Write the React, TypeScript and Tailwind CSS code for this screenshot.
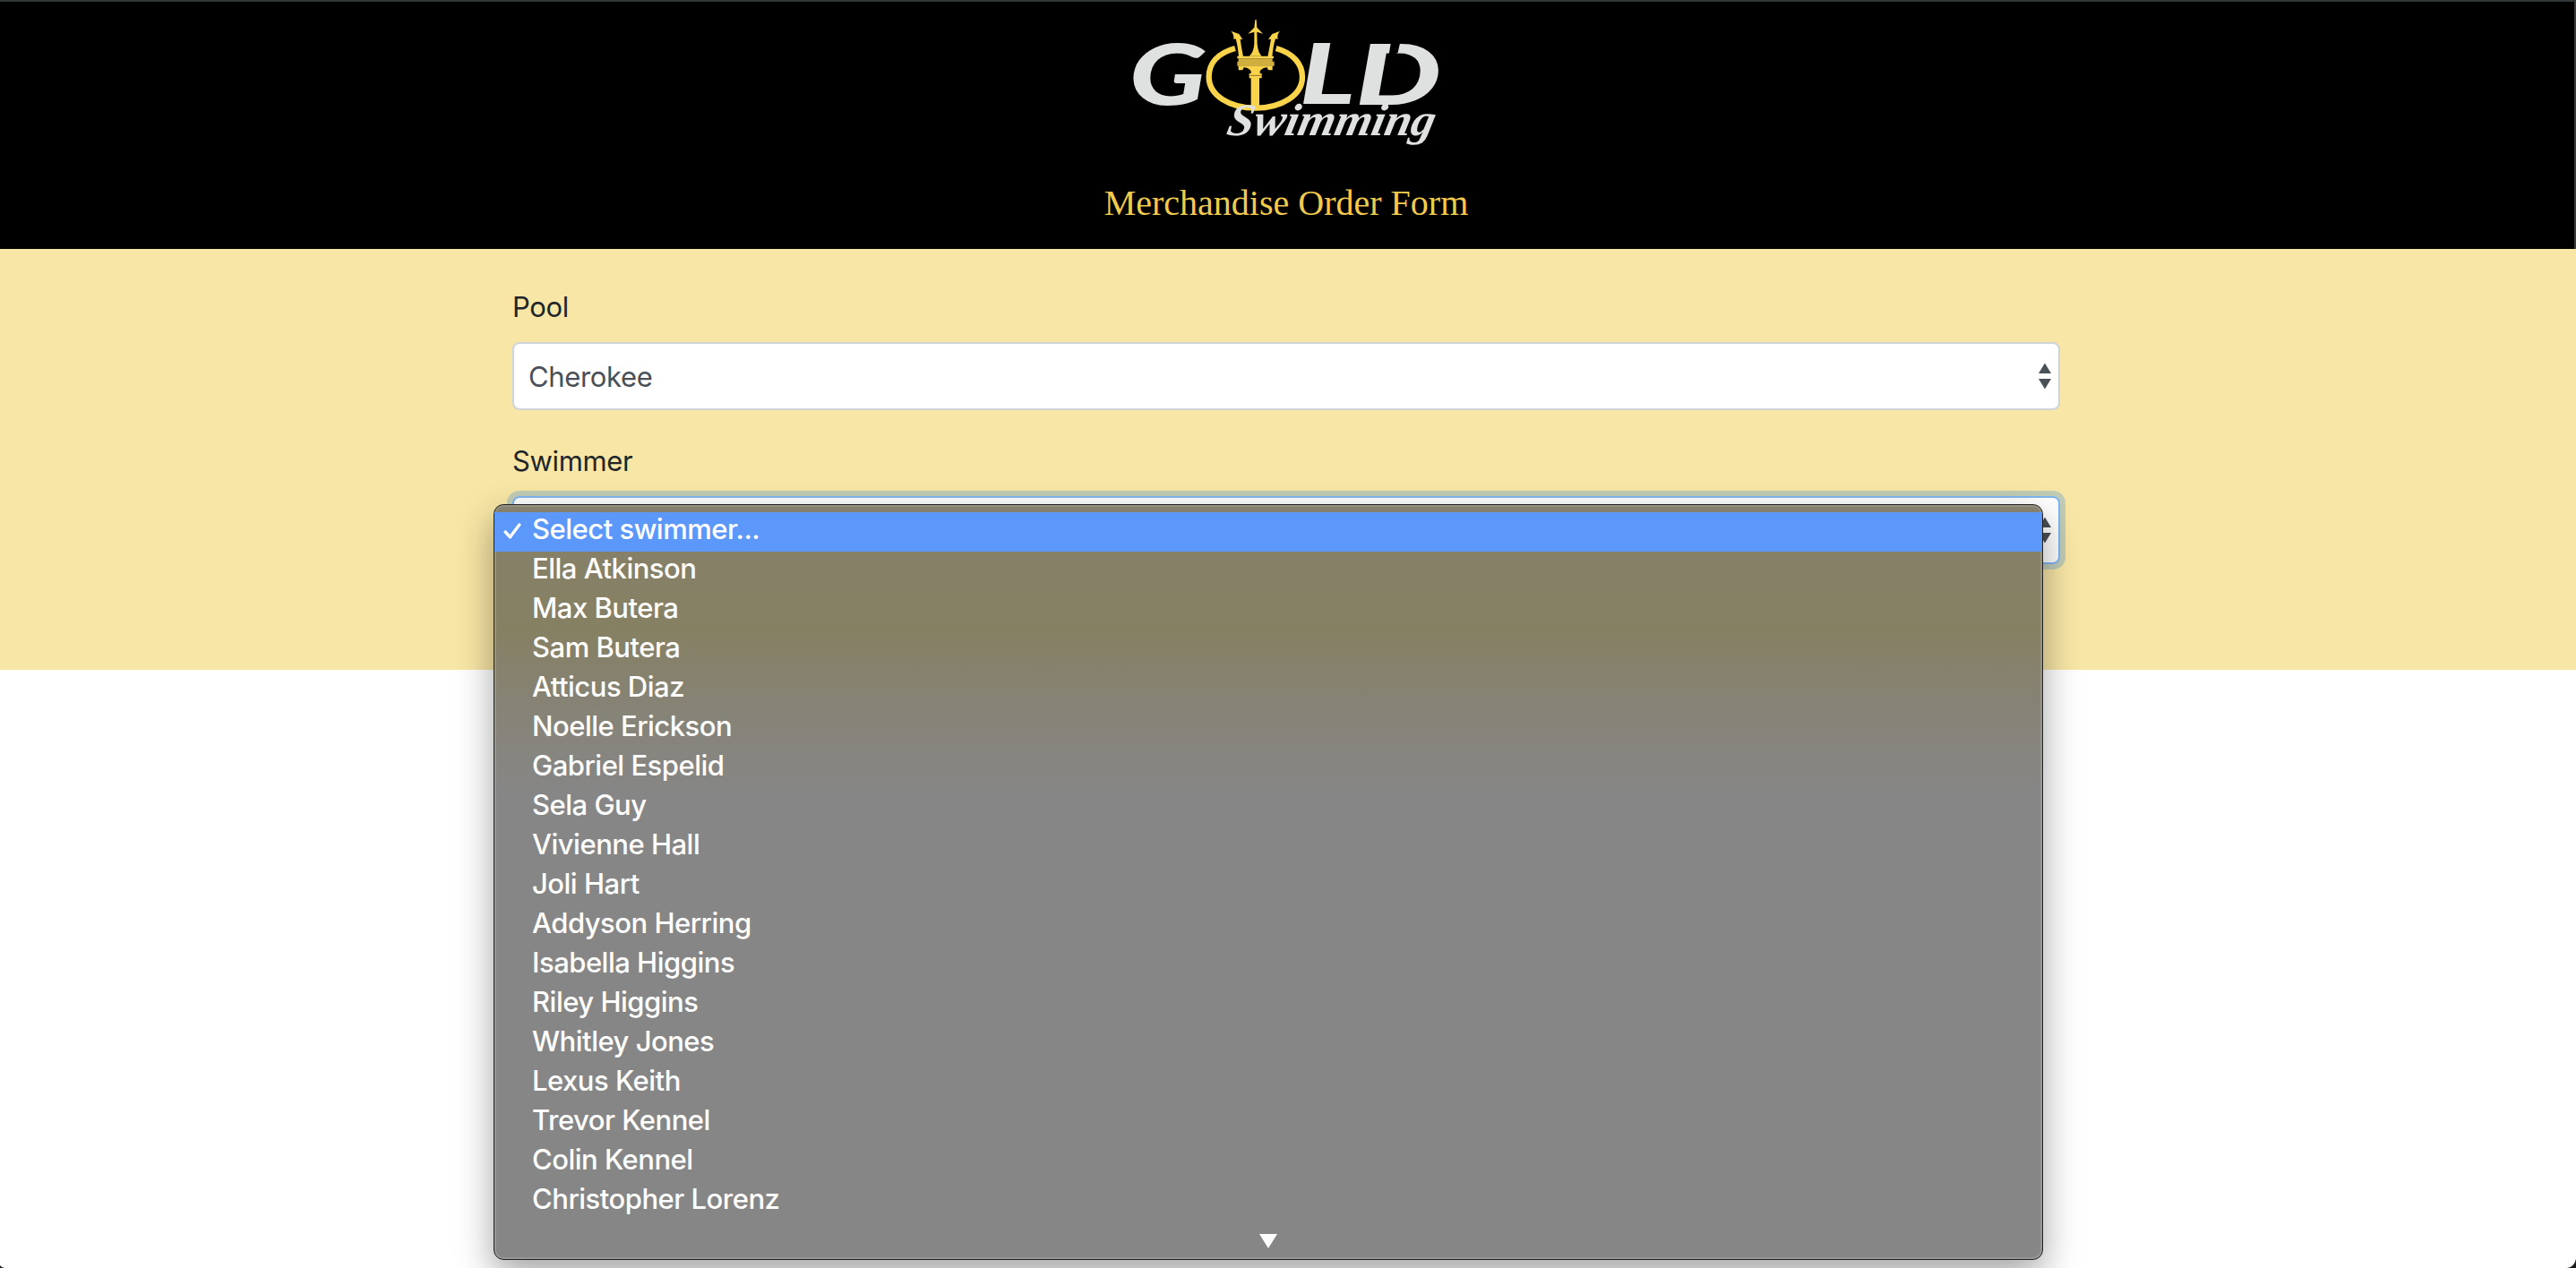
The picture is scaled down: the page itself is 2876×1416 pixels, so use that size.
const swimmers = [
  "Ella Atkinson",
  "Max Butera",
  "Sam Butera",
  "Atticus Diaz",
  "Noelle Erickson",
  "Gabriel Espelid",
  "Sela Guy",
  "Vivienne Hall",
  "Joli Hart",
  "Addyson Herring",
  "Isabella Higgins",
  "Riley Higgins",
  "Whitley Jones",
  "Lexus Keith",
  "Trevor Kennel",
  "Colin Kennel",
  "Christopher Lorenz",
];

function Logo() {
  return (
    <svg className="block h-[140px] w-[340px] overflow-visible" viewBox="78 66 1020 420">
      <g fill="#dfe1e0" fontFamily="Lato, sans-serif" fontWeight="900" fontStyle="italic" fontSize="280">
        <text x="0" y="0" transform="translate(62 350) scale(1.36 1)">G</text>
        <text x="0" y="0" transform="translate(632 349) scale(1.38 1)">L</text>
        <text x="0" y="0" transform="translate(820 352) scale(1.45 1)">D</text>
      </g>
      <path d="M939 140H970L962 176L930 194Z" fill="#000" />
      <g fill="none" stroke="#f9d44a" strokeWidth="19">
        <path d="M417 162C356 178 329 215 329 258C329 320 400 362 485 362C570 362 642 320 642 258C642 215 612 178 554 162" />
      </g>
      <g fill="#f9d44a">
        <path d="M484 66L488 66L490 92L510 113L490 107L491 148Q494 178 506 188H464Q478 178 481 148L481 107L460 113L481 92Z" />
        <path d="M403 104L430 114L442 132L434 131Q438 160 444 190H429Q426 155 419 130L412 131Q414 116 403 104Z" />
        <path d="M567 104L541 114L528 132L537 131Q532 160 526 190H541Q544 155 552 130L560 131Q556 116 567 104Z" />
        <path d="M424 188H546V196H424Z M428 220H542V235H528L524 226Q510 226 500 238V246H506V262H498V362H470V262H464V246H470V238Q460 226 446 226L442 235H428Z" />
      </g>
      <path d="M428 196H542V206H548V221H424V206H428Z" fill="#d0af3f" />
      <path d="M466 253H504" stroke="#8d7629" strokeWidth="3" />
      <text x="0" y="0" fontFamily="'Liberation Serif', serif" fontStyle="italic" fontWeight="700" fontSize="152" fill="#dfe1e0" textLength="694" lengthAdjust="spacingAndGlyphs" transform="translate(384 454) skewX(-12)">Swimming</text>
    </svg>
  );
}

function Arrows() {
  return (
    <svg className="h-[30px] w-[14px]" viewBox="0 0 14 30" fill="#495057">
      <path d="M7 0.5L14 12H0Z M0 18H14L7 29.5Z" />
    </svg>
  );
}

export default function App() {
  return (
    <div className="relative flex h-[1416px] w-[2876px] flex-col overflow-hidden bg-white font-['Inter',sans-serif] text-[31px] leading-[48px] tracking-[-0.35px]">
      <header className="flex h-[278px] flex-col items-center border-r-2 border-t-2 border-r-[#3b3b3b] border-t-[#32373a] bg-black pr-0.5 pt-5">
        <Logo />
        <h1 className="mt-[41px] font-['Liberation_Serif',serif] text-[40px] leading-[48px] tracking-normal text-[#f2cb4e]">Merchandise Order Form</h1>
      </header>
      <main className="h-[470px] bg-[#f8e6a6] pr-1 pt-[41px]">
        <form className="mx-auto flex w-[1728px] flex-col text-[#212529]">
          <label>Pool</label>
          <div className="mt-[15px] flex h-[76px] items-center justify-between rounded-lg border-2 border-[#ced4da] bg-white pl-4 pr-2 text-[#495057]">
            <span className="pt-px">Cherokee</span>
            <Arrows />
          </div>
          <label className="mt-[33px]">Swimmer</label>
          <div className="relative mt-[15px] flex h-[76px] items-center justify-end rounded-lg border-2 border-[#80b6f4] bg-white pr-2 shadow-[0_0_0_6px_rgba(0,113,235,0.22)]">
            <Arrows />
            <ul className="absolute left-[-23px] top-[7px] h-[844px] w-[1730px] rounded-[11px] border border-[#222] bg-[linear-gradient(180deg,#85806f_0px,#868068_60px,#868063_140px,#868375_220px,#868686_320px,#868686_100%)] pt-2 font-medium leading-[38px] tracking-[-0.5px] text-white shadow-[0_16px_40px_rgba(0,0,0,0.36),inset_0_0_0_2px_rgba(255,255,255,0.14)]">
              <li className="flex h-11 items-start bg-[#5b98fa] pl-[10px]">
                <svg className="mr-[12px] mt-[12px] h-[18px] w-5" viewBox="0 0 20 18" fill="none" stroke="#fff" strokeWidth="3.4" strokeLinecap="round" strokeLinejoin="round">
                  <path d="M2.2 10L7.5 15.8L17.8 2" />
                </svg>
                <span>Select swimmer...</span>
              </li>
              {swimmers.map((name) => (
                <li key={name} className="h-11 pl-[42px]">
                  {name}
                </li>
              ))}
              <li className="flex justify-center pt-[14px]">
                <svg className="h-4 w-5" viewBox="0 0 20 16" fill="#fff">
                  <path d="M0 0H20L10 16Z" />
                </svg>
              </li>
            </ul>
          </div>
        </form>
      </main>
      <svg className="absolute bottom-0 right-0 h-[10px] w-[10px]" viewBox="0 0 10 10" fill="#1c1c1c">
        <path d="M10 0V10H0Q8 9 10 0Z" />
      </svg>
      <svg className="absolute bottom-0 left-0 h-[3px] w-[5px]" viewBox="0 0 5 3" fill="#1c1c1c">
        <path d="M0 0V3H5Q1 2 0 0Z" />
      </svg>
    </div>
  );
}
